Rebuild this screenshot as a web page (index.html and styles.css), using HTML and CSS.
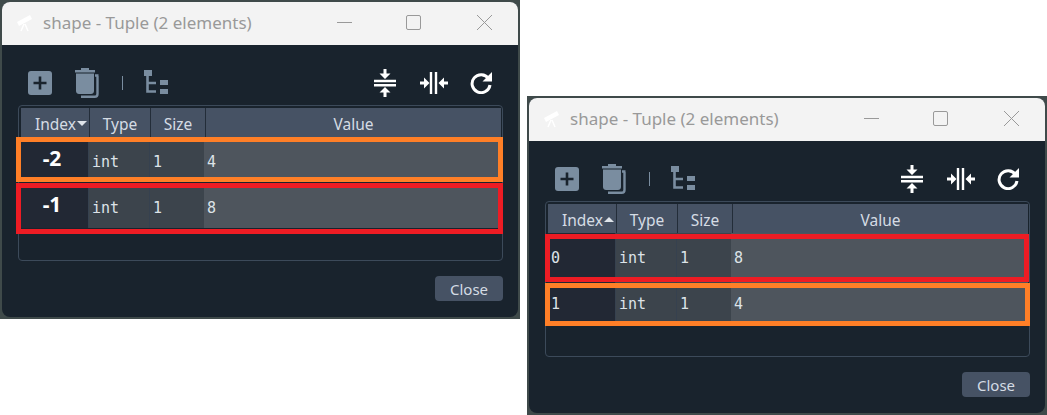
FILE: index.html
```html
<!DOCTYPE html>
<html lang="en">
<head>
  <meta charset="UTF-8" />
  <meta name="viewport" content="width=device-width, initial-scale=1" />
  <title>Tuple editor</title>
  <link rel="stylesheet" href="styles.css">
</head>
<body>
  <svg class="defs" width="0" height="0">
    <symbol id="i-logo" viewBox="0 0 18 18">
      <path d="M1 8 14 1l2 4L3 12z" fill="#fff"/>
      <path d="M8 10l-3 7M9 10l3 7" stroke="#fff" stroke-width="1.5" fill="none"/>
    </symbol>
    <symbol id="i-add" viewBox="0 0 24 24">
      <rect width="24" height="24" rx="3" fill="#7a8da0"/>
      <path d="M12 5.500v13M5.500 12h13" stroke="#19232d" stroke-width="2.600"/>
    </symbol>
    <symbol id="i-trash" viewBox="0 0 28 30">
      <path d="M2 2h20v2.500H2zM8 0h8v2H8z" fill="#7a8da0"/>
      <path d="M3 5.500h18V23c0 2-1.500 3-3 3H6c-1.500 0-3-1-3-3z" fill="#7a8da0"/>
      <path d="M22 7.500h3.500M24.500 8v18c0 1.600-1.200 2.800-2.800 2.800H8" stroke="#7a8da0" stroke-width="2.400" fill="none"/>
    </symbol>
    <symbol id="i-tree" viewBox="0 0 24 26">
      <path d="M0 0h8v6H0zM16 10h8v5h-8zM16 19h8v5h-8z" fill="#7a8da0"/>
      <path d="M3.500 6v15.500H12M3.500 13H12" stroke="#7a8da0" stroke-width="2.600" fill="none"/>
    </symbol>
    <symbol id="i-collapse-v" viewBox="0 0 26 28">
      <path d="M2 12h22M2 16.300h22" stroke="#fff" stroke-width="2.400"/>
      <path d="M13 0v6M13 22v6" stroke="#fff" stroke-width="3"/>
      <path d="M7.500 4.500h11L13 10zM7.500 23.500h11L13 18z" fill="#fff"/>
    </symbol>
    <symbol id="i-collapse-h" viewBox="0 0 28 22">
      <path d="M11 0v22M16 0v22" stroke="#fff" stroke-width="2.400"/>
      <path d="M0 11h5M23 11h5" stroke="#fff" stroke-width="3"/>
      <path d="M4 5.500v11l5.500-5.500zM24 5.500v11L18.500 11z" fill="#fff"/>
    </symbol>
    <symbol id="i-refresh" viewBox="0 0 22 22">
      <path d="M18.500 6.500A9 9 0 1 0 20 13" stroke="#fff" stroke-width="3" fill="none"/>
      <path d="M22 0v9.500h-9.500z" fill="#fff"/>
    </symbol>
  </svg>

  <div class="window window-left">
    <div class="titlebar">
      <svg class="logo"><use href="#i-logo"/></svg>
      <span class="title">shape - Tuple (2 elements)</span>
      <span class="win-min"></span>
      <span class="win-max"></span>
      <svg class="win-close" viewBox="0 0 15 15"><path d="M0 0l15 15M15 0 0 15"/></svg>
    </div>
    <div class="toolbar">
      <svg class="ic-add"><use href="#i-add"/></svg>
      <svg class="ic-trash"><use href="#i-trash"/></svg>
      <span class="sep"></span>
      <svg class="ic-tree"><use href="#i-tree"/></svg>
      <div class="toolbar-right">
        <svg class="ic-cv"><use href="#i-collapse-v"/></svg>
        <svg class="ic-ch"><use href="#i-collapse-h"/></svg>
        <svg class="ic-re"><use href="#i-refresh"/></svg>
      </div>
    </div>
    <div class="frame">
      <div class="head">
        <div class="th th-index">Index<span class="sort-down"></span></div>
        <div class="th">Type</div>
        <div class="th">Size</div>
        <div class="th">Value</div>
      </div>
      <div class="row">
        <div class="td td-index big">-2</div>
        <div class="td td-mid">int</div>
        <div class="td td-mid">1</div>
        <div class="td td-val">4</div>
      </div>
      <div class="row">
        <div class="td td-index big">-1</div>
        <div class="td td-mid">int</div>
        <div class="td td-mid">1</div>
        <div class="td td-val">8</div>
      </div>
    </div>
    <div class="footer"><button class="close">Close</button></div>
    <div class="mark mark-orange l-top"></div>
    <div class="mark mark-red l-bottom"></div>
  </div>

  <div class="window window-right">
    <div class="titlebar">
      <svg class="logo"><use href="#i-logo"/></svg>
      <span class="title">shape - Tuple (2 elements)</span>
      <span class="win-min"></span>
      <span class="win-max"></span>
      <svg class="win-close" viewBox="0 0 15 15"><path d="M0 0l15 15M15 0 0 15"/></svg>
    </div>
    <div class="toolbar">
      <svg class="ic-add"><use href="#i-add"/></svg>
      <svg class="ic-trash"><use href="#i-trash"/></svg>
      <span class="sep"></span>
      <svg class="ic-tree"><use href="#i-tree"/></svg>
      <div class="toolbar-right">
        <svg class="ic-cv"><use href="#i-collapse-v"/></svg>
        <svg class="ic-ch"><use href="#i-collapse-h"/></svg>
        <svg class="ic-re"><use href="#i-refresh"/></svg>
      </div>
    </div>
    <div class="frame">
      <div class="head">
        <div class="th th-index">Index<span class="sort-up"></span></div>
        <div class="th">Type</div>
        <div class="th">Size</div>
        <div class="th">Value</div>
      </div>
      <div class="row">
        <div class="td td-index">0</div>
        <div class="td td-mid">int</div>
        <div class="td td-mid">1</div>
        <div class="td td-val">8</div>
      </div>
      <div class="row">
        <div class="td td-index">1</div>
        <div class="td td-mid">int</div>
        <div class="td td-mid">1</div>
        <div class="td td-val">4</div>
      </div>
    </div>
    <div class="footer"><button class="close">Close</button></div>
    <div class="mark mark-red r-top"></div>
    <div class="mark mark-orange r-bottom"></div>
  </div>
</body>
</html>
```

FILE: styles.css
```css
body {
  margin: 0;
  width: 1047px;
  height: 415px;
  position: relative;
  overflow: hidden;
  background: #fff;
  font-family: "Noto Sans", sans-serif;
}
.defs {
  position: absolute;
}

/* the two windows sit freely on the white canvas */
.window {
  position: absolute;
  width: 520px;
  height: 319px;
  box-sizing: border-box;
  padding: 2px;
  background: #3f4a4a;
  display: flex;
  flex-direction: column;
}
.window-left {
  left: 0;
  top: 0;
}
.window-right {
  left: 527px;
  top: 96px;
}
.window::after {
  content: "";
  position: absolute;
  inset: 2px;
  z-index: 0;
  background: #19232d;
  border-radius: 8px;
}
.window > * {
  position: relative;
  z-index: 1;
}

.titlebar {
  height: 43px;
  flex: none;
  box-sizing: border-box;
  padding-bottom: 2px;
  background: #f3f3f3;
  border-radius: 8px 8px 0 0;
  display: flex;
  align-items: center;
  color: #999;
}
.logo {
  width: 18px;
  height: 18px;
  margin-left: 14px;
  margin-right: 9px;
}
.title {
  font-size: 17px;
  margin-top: -1px;
  flex: 1;
}
.win-min {
  width: 15px;
  height: 1px;
  background: #999;
}
.win-max {
  width: 13px;
  height: 13px;
  border: 1px solid #999;
  border-radius: 2px;
  margin-left: 54px;
}
.win-close {
  width: 15px;
  height: 15px;
  margin-left: 56px;
  margin-right: 26px;
  stroke: #999;
  stroke-width: 1;
  fill: none;
}

.toolbar {
  height: 60px;
  flex: none;
  box-sizing: border-box;
  padding: 16px 26px 0 26px;
  display: flex;
  align-items: center;
  gap: 21px;
}
.toolbar svg {
  flex: none;
}
.toolbar-right {
  margin-left: auto;
  display: flex;
  align-items: center;
  gap: 22px;
}
.ic-add { width: 24px; height: 24px; }
.ic-trash { width: 28px; height: 30px; }
.ic-tree { width: 24px; height: 26px; }
.ic-cv { width: 26px; height: 28px; }
.ic-ch { width: 28px; height: 22px; }
.ic-re { width: 22px; height: 22px; }
.sep {
  width: 1px;
  height: 14px;
  background: #7a8da0;
}

.frame {
  height: 156px;
  flex: none;
  box-sizing: border-box;
  margin: 0 15px 0 16px;
  padding: 2px 1px 0 2px;
  border: 1px solid #3c4a5a;
  border-radius: 4px;
  display: flex;
  flex-direction: column;
}
.head {
  height: 29px;
  flex: none;
  display: grid;
  grid-template-columns: 68px 61px 55px 1fr;
  background: #465264;
}
.th {
  box-sizing: border-box;
  padding-top: 2px;
  color: #d5dce4;
  font-size: 15.5px;
  display: flex;
  align-items: center;
  justify-content: center;
  border-left: 1px solid #232d39;
}
.th:first-child {
  border-left: 0;
}
.th-index {
  justify-content: flex-start;
  padding-left: 14px;
  gap: 1px;
}
.sort-down {
  width: 0;
  height: 0;
  border-left: 5px solid transparent;
  border-right: 5px solid transparent;
  border-top: 5px solid #dfe4ea;
}
.sort-up {
  width: 0;
  height: 0;
  border-left: 5px solid transparent;
  border-right: 5px solid transparent;
  border-bottom: 5px solid #dfe4ea;
}
.row {
  height: 45px;
  flex: none;
  margin-bottom: 1px;
  display: grid;
  grid-template-columns: 67px 61px 55px 1fr;
}
.td {
  box-sizing: border-box;
  padding: 4px 0 0 3px;
  display: flex;
  align-items: center;
  color: #dde3e8;
  font-family: "DejaVu Sans Mono", monospace;
  font-size: 15px;
}
.td-index {
  background: #222834;
}
.td-mid {
  background: #3c444c;
  border-left: 1px solid #36414f;
}
.td-val {
  background: #4e555d;
}
.big {
  padding: 0 5px 3px 0;
  justify-content: center;
  color: #fff;
  font-family: "Noto Sans", sans-serif;
  font-size: 21px;
  font-weight: 700;
}

.footer {
  margin: 15px 15px 0 0;
  display: flex;
  justify-content: flex-end;
}
.close {
  width: 68px;
  height: 25px;
  padding: 0;
  border: 0;
  border-radius: 4px;
  background: #465264;
  color: #d5dce4;
  font-family: "Noto Sans", sans-serif;
  font-size: 15px;
}

/* highlight boxes drawn over the rows */
.window > .mark {
  position: absolute;
  box-sizing: border-box;
  border-style: solid;
  border-width: 5px;
  z-index: 2;
}
.mark-orange {
  border-color: #ff7f27;
}
.mark-red {
  border-color: #ed1c24;
}
.l-top {
  left: 16px;
  top: 137px;
  width: 487px;
  height: 45px;
}
.l-bottom {
  left: 16px;
  top: 183px;
  width: 487px;
  height: 51px;
}
.r-top {
  left: 18px;
  top: 138px;
  width: 484px;
  height: 48px;
}
.r-bottom {
  left: 18px;
  top: 187px;
  width: 485px;
  height: 43px;
}
```
